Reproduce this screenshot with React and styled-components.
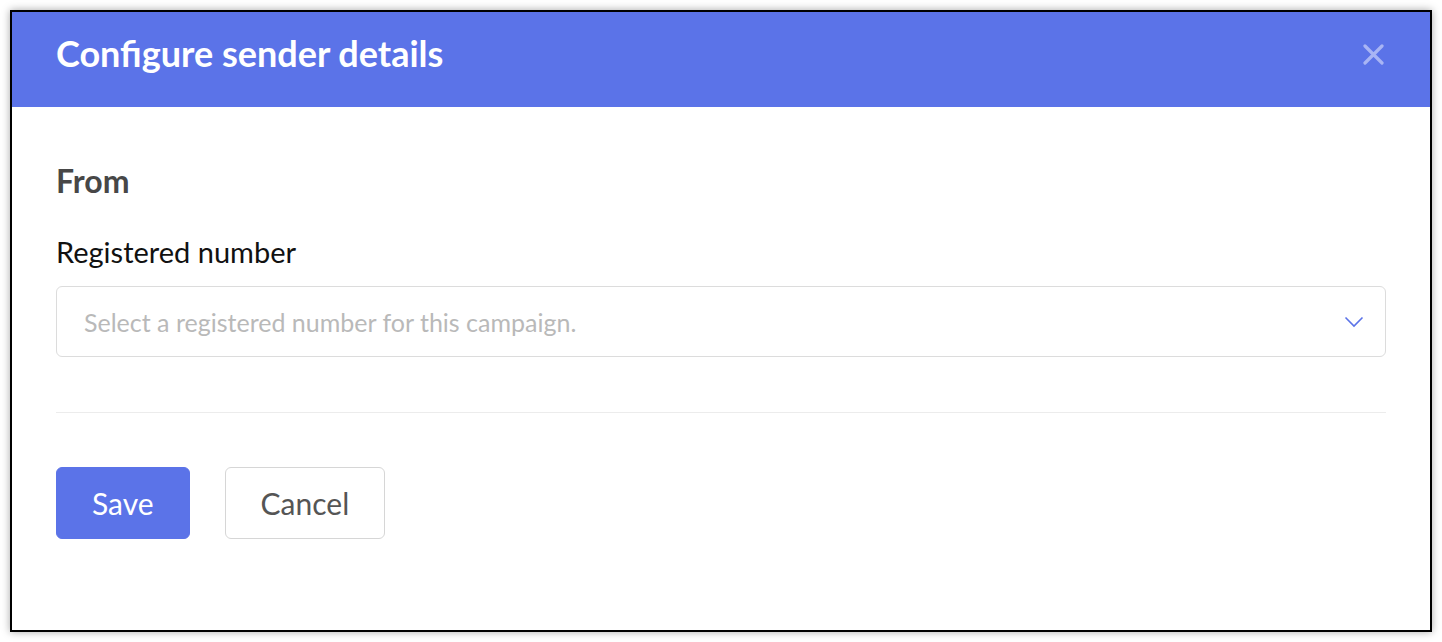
import styled, { createGlobalStyle } from "styled-components";

const GlobalStyle = createGlobalStyle`
  html, body {
    margin: 0;
    padding: 0;
    background: #ffffff;
    font-family: "Lato", "Open Sans", sans-serif;
  }
`;

const Page = styled.div`
  width: 1442px;
  height: 642px;
  padding: 10px;
  box-sizing: border-box;
`;

const Modal = styled.div`
  height: 100%;
  box-sizing: border-box;
  border: 2px solid #000;
  box-shadow: 0 0 8px rgba(0, 0, 0, 0.35);
  display: flex;
  flex-direction: column;
  background: #fff;
`;

const Header = styled.div`
  height: 95px;
  box-sizing: border-box;
  background: #5b73e8;
  display: flex;
  align-items: center;
  justify-content: space-between;
  padding: 0 46px 13px 44px;
`;

const Title = styled.h1`
  margin: 0;
  color: #fff;
  font-size: 36px;
  font-weight: 700;
  line-height: 36px;
`;

const CloseButton = styled.button`
  border: 0;
  background: none;
  padding: 0;
  margin-top: 2px;
  width: 21px;
  height: 21px;
  display: flex;
  cursor: pointer;
`;

const Body = styled.div`
  padding: 54px 44px 0;
  display: flex;
  flex-direction: column;
`;

const SectionTitle = styled.h2`
  margin: 0;
  font-size: 32px;
  font-weight: 700;
  color: #474747;
  line-height: 40px;
`;

const Label = styled.label`
  margin-top: 33px;
  font-size: 29px;
  color: #111;
  line-height: 36px;
`;

const Select = styled.div`
  margin-top: 16px;
  height: 71px;
  box-sizing: border-box;
  border: 1px solid #dcdcdc;
  border-radius: 6px;
  display: flex;
  align-items: center;
  justify-content: space-between;
  padding: 0 21px 0 27px;
  cursor: pointer;
`;

const Placeholder = styled.span`
  font-size: 25px;
  color: #b9b9b9;
`;

const Divider = styled.hr`
  margin: 55px 0 0;
  border: 0;
  border-top: 1px solid #ececec;
`;

const Actions = styled.div`
  margin-top: 54px;
  display: flex;
  gap: 35px;
`;

const Button = styled.button`
  height: 72px;
  box-sizing: border-box;
  padding: 0 35px;
  border-radius: 6px;
  border: 1px solid ${(p) => (p.$primary ? "#5b73e8" : "#d6d6d6")};
  background: ${(p) => (p.$primary ? "#5b73e8" : "#fff")};
  color: ${(p) => (p.$primary ? "#fff" : "#555")};
  font-family: "Lato", sans-serif;
  font-size: 30px;
  cursor: pointer;
`;

const App = () => {
  return (
    <Page>
      <GlobalStyle />
      <Modal>
        <Header>
          <Title>Configure sender details</Title>
          <CloseButton aria-label="Close">
            <svg width="21" height="21" viewBox="0 0 21 21">
              <path
                d="M2 2 L19 19 M19 2 L2 19"
                stroke="#a9b5f4"
                strokeWidth="3.2"
                strokeLinecap="round"
              />
            </svg>
          </CloseButton>
        </Header>
        <Body>
          <SectionTitle>From</SectionTitle>
          <Label>Registered number</Label>
          <Select>
            <Placeholder>Select a registered number for this campaign.</Placeholder>
            <svg width="20" height="12" viewBox="0 0 20 12">
              <path
                d="M1.5 1.5 L10 10 L18.5 1.5"
                stroke="#5b73e8"
                strokeWidth="1.6"
                fill="none"
              />
            </svg>
          </Select>
          <Divider />
          <Actions>
            <Button $primary>Save</Button>
            <Button>Cancel</Button>
          </Actions>
        </Body>
      </Modal>
    </Page>
  );
};

export default App;
